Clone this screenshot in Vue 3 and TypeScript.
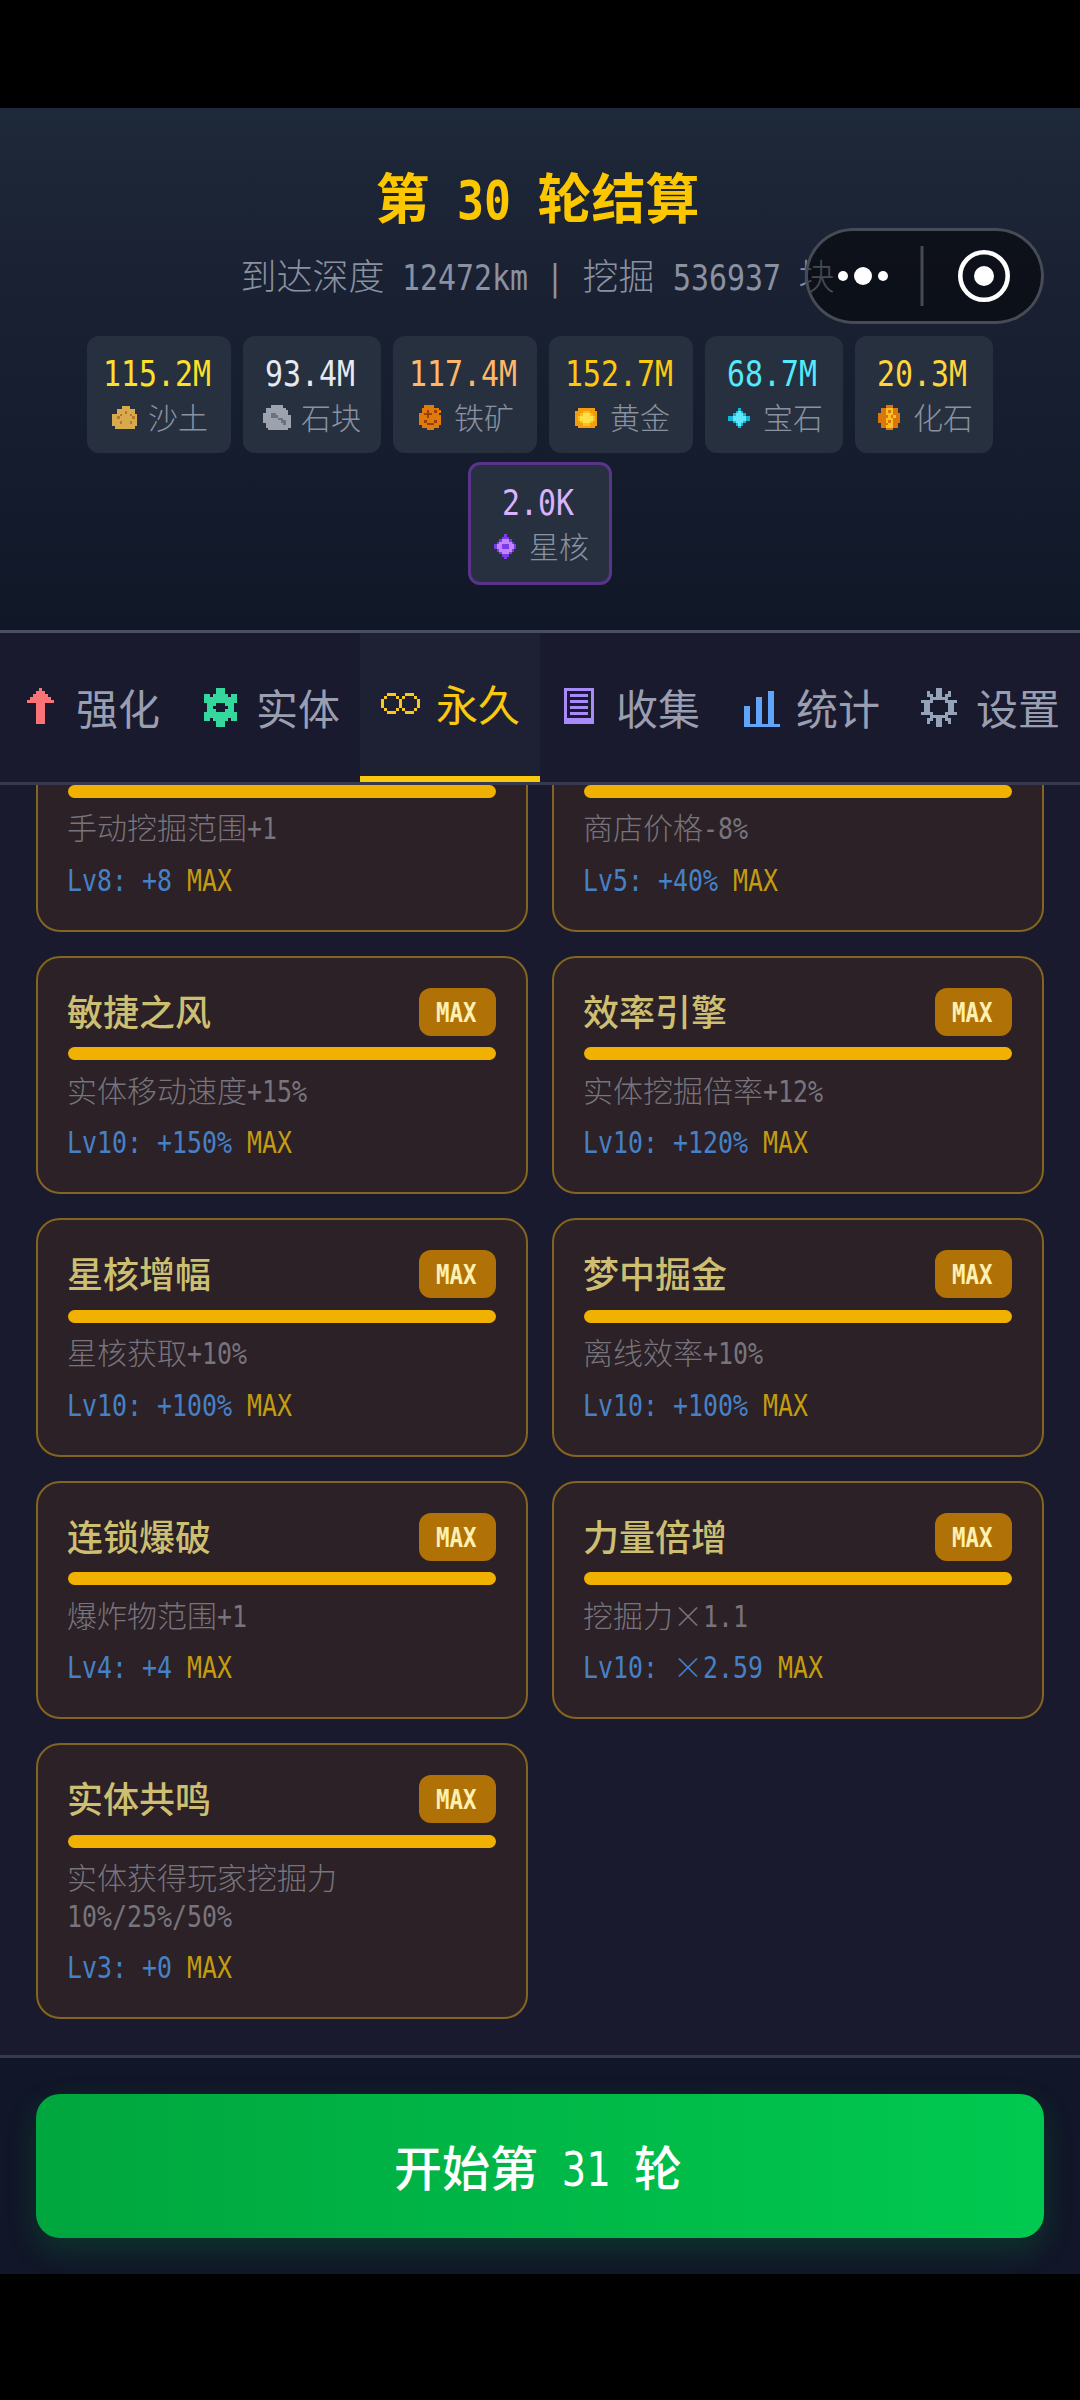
<script setup lang="ts">
import { h } from 'vue'

interface PixelIcon {
  map: string[]
  colors: Record<string, string>
  at?: [number, number]
}

interface Resource {
  value: string
  label: string
  color: string
  icon: string
  rare?: boolean
}

interface Upgrade {
  name?: string
  desc: string
  level: string
  bonus: string
}

/* Latin runs take half an em per character, ideographs and × a full em */
const Mono = (props: { t: string }) =>
  (props.t.match(/×| +|[\x21-\x7e]+|[^\x20-\x7e×]+/g) ?? []).map((run) => {
    if (run === '×') return h('span', { class: 'mono-wide' }, run)
    if (run[0] === ' ') return h('span', { class: 'mono-space' }, run)
    return /^[\x21-\x7e]/.test(run)
      ? h('span', { class: 'mono-half', style: { width: `${run.length / 2}em` } }, run)
      : run
  })
Mono.props = ['t']

/* Tab icons sit on a fixed 14×14 board, chip icons are as large as their map */
const Pixels = (props: { name: string; cell: number; board?: number }) => {
  const icon = icons[props.name]
  const [ox, oy] = icon.at ?? [0, 0]
  const rects = icon.map.flatMap((row, y) =>
    [...row].flatMap((c, x) =>
      c === '.' ? [] : [h('rect', { x: x + ox, y: y + oy, width: 1.02, height: 1.02, fill: icon.colors[c] })],
    ),
  )
  const w = props.board ?? icon.map[0].length
  const hgt = props.board ?? icon.map.length
  return h(
    'svg',
    { width: w * props.cell, height: hgt * props.cell, viewBox: `0 0 ${w} ${hgt}`, 'shape-rendering': 'crispEdges' },
    rects,
  )
}
Pixels.props = ['name', 'cell', 'board']

const icons: Record<string, PixelIcon> = {
  up: {
    at: [2, 0],
    colors: { a: '#fb7376' },
    map: ['....a....', '...aaa...', '..aaaaa..', '.aaaaaaa.', 'aaaaaaaaa', '...aaa...', '...aaa...', '...aaa...', '...aaa...', '...aaa...', '...aaa...', '...aaa...'],
  },
  entity: {
    at: [1, 0],
    colors: { a: '#34d89d' },
    map: ['....aaa....', '....aaa....', 'aa.aaaaa.aa', 'aaaaaaaaaaa', 'aaaaaaaaaaa', '.aaa...aaa.', '.aa.....aa.', '.aaa...aaa.', 'aaaaaaaaaaa', 'aaaaaaaaaaa', 'aa.aaaaa.aa', '....aaa....', '....aaa....'],
  },
  infinity: {
    at: [0, 3],
    colors: { a: '#fac81e' },
    map: ['..aaa...aaa..', '.a...a.a...a.', 'a.....a.....a', 'a.....a.....a', 'a.....a.....a', '.a...a.a...a.', '..aaa...aaa..'],
  },
  book: {
    at: [1, 0],
    colors: { a: '#a78bfa' },
    map: ['aaaaaaaaaa', 'a........a', 'a.aaaaaa.a', 'a........a', 'a.aaaaaa.a', 'a........a', 'a.aaaaaa.a', 'a........a', 'a.aaaaaa.a', 'a........a', 'aaaaaaaaaa', 'aaaaaaaaaa'],
  },
  chart: {
    at: [1, 1],
    colors: { a: '#60a5fa' },
    map: ['........aa..', '........aa..', '....aa..aa..', '....aa..aa..', '....aa..aa..', 'aa..aa..aa..', 'aa..aa..aa..', 'aa..aa..aa..', 'aa..aa..aa..', 'aa..aa..aa..', 'aa..aa..aa..', 'aaaaaaaaaaaa'],
  },
  gear: {
    colors: { a: '#94a3b8' },
    map: ['.....aa.....', '..a..aa..a..', '..aa.aa.aa..', '...aaaaaa...', 'aaaa....aaaa', '.aa......aa.', '.aa......aa.', '.aa......aa.', 'aaaa....aaaa', '...aaaaaa...', '..aa.aa.aa..', '..a..aa..a..', '.....aa.....'],
  },
  sand: {
    colors: { a: '#d9a94e', b: '#b07a2c' },
    map: ['....aaa...', '..aaaaaaa.', '..aaabaaa.', 'aaabaaabaa', 'aabaaaaaba', 'aaaaaaaaaa', 'aaabaaabaa', 'aaaaaaaaaa', '.aaaaaaaa.'],
  },
  stone: {
    colors: { a: '#9ca3af', b: '#6b7280' },
    map: ['...aaaaa...', '.aaaaaaaa..', '.aaaaaaaaa.', 'aaabbaaaaa.', 'aaabbbaaaaa', 'aaaaaabbaaa', 'aaaaaaabbaa', '.aaaaaaabaa', '.aaaaaaaaaa', '..aaaaaaaa.'],
  },
  iron: {
    colors: { a: '#e07b0b', b: '#9a3f08' },
    map: ['..aaaa...', '.aaaaaaa.', '.aabaabaa', 'aabbbaaa.', 'aaabaaaaa', 'aaaaaaaaa', 'aabaaabaa', 'aaabbbaaa', '.aaaaaaa.', '...aaa...'],
  },
  gold: {
    colors: { a: '#f39c0c', b: '#fbbf24', c: '#fde047' },
    map: ['.aaaaaaa.', 'aaabbbaaa', 'aabcccbaa', 'abcccccba', 'abcccccba', 'aabcccbaa', 'aaabbbaaa', '.aaaaaaa.'],
  },
  gem: {
    colors: { a: '#12b5d6', b: '#5ee6fb' },
    map: ['....a....', '...aba...', '..abbba..', 'aabbbbbaa', 'aabbbbbaa', '..abbba..', '...aba...', '....a....'],
  },
  fossil: {
    colors: { a: '#d9770a', b: '#fbbf24' },
    map: ['...aaa...', '.aabbbaa.', '.aababaa.', 'aaabbbaaa', 'aaaababaa', 'aaabbbaaa', 'aaababaaa', '.aaabbaa.', '.aabbbaa.', '...aaa...'],
  },
  core: {
    colors: { a: '#7c3aed', b: '#c084fc' },
    map: ['....a....', '...aaa...', '..abbba..', '.abbbbba.', 'abbaaabba', 'abbaaabba', '.abbbbba.', '..abbba..', '...aaa...', '....a....'],
  },
}

const resources: Resource[] = [
  { value: '115.2M', label: '沙土', color: '#fce029', icon: 'sand' },
  { value: '93.4M', label: '石块', color: '#e5eaf2', icon: 'stone' },
  { value: '117.4M', label: '铁矿', color: '#ffb86a', icon: 'iron' },
  { value: '152.7M', label: '黄金', color: '#fcc810', icon: 'gold' },
  { value: '68.7M', label: '宝石', color: '#53eafd', icon: 'gem' },
  { value: '20.3M', label: '化石', color: '#ffd53a', icon: 'fossil' },
  { value: '2.0K', label: '星核', color: '#dab2ff', icon: 'core', rare: true },
]

const tabs = [
  { label: '强化', icon: 'up' },
  { label: '实体', icon: 'entity' },
  { label: '永久', icon: 'infinity', active: true },
  { label: '收集', icon: 'book' },
  { label: '统计', icon: 'chart' },
  { label: '设置', icon: 'gear' },
]

/* The first row is scrolled up under the tabs, so its heads carry no text */
const upgrades: Upgrade[] = [
  { desc: '手动挖掘范围+1', level: 'Lv8:', bonus: '+8' },
  { desc: '商店价格-8%', level: 'Lv5:', bonus: '+40%' },
  { name: '敏捷之风', desc: '实体移动速度+15%', level: 'Lv10:', bonus: '+150%' },
  { name: '效率引擎', desc: '实体挖掘倍率+12%', level: 'Lv10:', bonus: '+120%' },
  { name: '星核增幅', desc: '星核获取+10%', level: 'Lv10:', bonus: '+100%' },
  { name: '梦中掘金', desc: '离线效率+10%', level: 'Lv10:', bonus: '+100%' },
  { name: '连锁爆破', desc: '爆炸物范围+1', level: 'Lv4:', bonus: '+4' },
  { name: '力量倍增', desc: '挖掘力×1.1', level: 'Lv10:', bonus: '×2.59' },
  { name: '实体共鸣', desc: '实体获得玩家挖掘力 10%/25%/50%', level: 'Lv3:', bonus: '+0' },
]
</script>

<template>
  <div class="screen">
    <header class="summary">
      <h1><Mono t="第 30 轮结算" /></h1>
      <p class="sub"><Mono t="到达深度 12472km | 挖掘 536937 块" /></p>
      <div class="chips">
        <div v-for="r in resources" :key="r.label" class="chip" :class="{ rare: r.rare }">
          <div class="chip-value" :style="{ color: r.color }"><Mono :t="r.value" /></div>
          <div class="chip-label"><i class="chip-icon"><Pixels :name="r.icon" :cell="2.5" /></i>{{ r.label }}</div>
        </div>
      </div>
      <div class="capsule">
        <svg width="239" height="96" viewBox="0 0 239 96">
          <g fill="#fff">
            <circle cx="38" cy="48" r="5" />
            <circle cx="58" cy="48" r="9" />
            <circle cx="78" cy="48" r="5" />
            <circle cx="179" cy="48" r="10" />
          </g>
          <rect x="115.5" y="18" width="3" height="60" fill="#464a53" />
          <circle cx="179" cy="48" r="23.7" fill="none" stroke="#fff" stroke-width="4.6" />
        </svg>
      </div>
    </header>

    <nav class="tabs">
      <div v-for="t in tabs" :key="t.label" class="tab" :class="{ active: t.active }">
        <i class="tab-icon"><Pixels :name="t.icon" :cell="3" :board="14" /></i>
        <span class="tab-text">{{ t.label }}</span>
      </div>
    </nav>

    <main class="list">
      <div class="grid">
        <section v-for="(u, i) in upgrades" :key="i" class="card">
          <div class="card-head">
            <template v-if="u.name">
              <h2>{{ u.name }}</h2>
              <span class="badge"><Mono t="MAX" /></span>
            </template>
          </div>
          <div class="bar"></div>
          <p class="desc"><Mono :t="u.desc" /></p>
          <p class="level"><Mono :t="`${u.level} ${u.bonus}`" /><span class="max"><Mono t=" MAX" /></span></p>
        </section>
      </div>
    </main>

    <footer class="foot">
      <button type="button"><Mono t="开始第 31 轮" /></button>
    </footer>
  </div>
</template>

<style>
body {
  background: #000;
}
.mono-half {
  display: inline-block;
  white-space: nowrap;
  text-align: left;
  transform: scaleX(0.83);
  transform-origin: 0 50%;
}
.mono-space {
  letter-spacing: -0.102em;
}
.mono-wide {
  display: inline-block;
  width: 1em;
  font-family: 'Noto Sans CJK SC', sans-serif;
  font-weight: 300;
  line-height: 1;
  text-align: center;
}
</style>

<style scoped>
.screen {
  box-sizing: border-box;
  width: 1080px;
  height: 2400px;
  padding: 108px 0 126px;
  background: #000;
  display: flex;
  flex-direction: column;
  overflow: hidden;
  font-family: 'DejaVu Sans Mono', 'Noto Sans CJK SC', monospace;
}
h1, h2, p {
  margin: 0;
  font-weight: 400;
}
.summary {
  position: relative;
  box-sizing: border-box;
  flex: none;
  height: 525px;
  padding-top: 62px;
  border-bottom: 3px solid #4a4e60;
  background: linear-gradient(180deg, #1e2939, #1a2133 32%, #101828);
  text-align: center;
}
h1 {
  margin-left: -5px;
  font-size: 54px;
  line-height: 62px;
  font-weight: 700;
  color: #fdc700;
}
.sub {
  margin: 23px 0 0 -5px;
  font-size: 36px;
  line-height: 45px;
  font-weight: 300;
  color: #8a92a1;
}
.chips {
  margin-top: 36px;
  padding: 0 60px;
  display: flex;
  flex-wrap: wrap;
  justify-content: center;
  gap: 9px 12px;
}
.chip {
  padding: 12px 18px;
  border-radius: 12px;
  background: #27303f;
}
.chip.rare {
  border: 3px solid #59348a;
}
.chip-value {
  margin: 0 2px 0 -2px;
  padding-top: 3px;
  font-size: 36px;
  line-height: 45px;
}
.chip-label {
  display: flex;
  align-items: center;
  justify-content: center;
  gap: 6px;
  margin: 0 2px 0 -2px;
  font-size: 30px;
  line-height: 45px;
  font-weight: 300;
  color: #8a92a1;
}
.chip-icon {
  width: 36px;
  height: 45px;
  padding-bottom: 2px;
  box-sizing: border-box;
  display: flex;
  align-items: center;
  justify-content: center;
}
.capsule {
  position: absolute;
  top: 120px;
  right: 36px;
  width: 239px;
  height: 96px;
  box-sizing: border-box;
  border-radius: 48px;
  background: rgba(0, 0, 0, 0.5);
  box-shadow: inset 0 0 0 3px #474b56;
}
.capsule svg {
  display: block;
}
.tabs {
  flex: none;
  display: flex;
  height: 149px;
  background: #1a1a2e;
  border-bottom: 3px solid #363a4e;
}
.tab {
  box-sizing: border-box;
  width: 180px;
  padding: 3px 0 0 21px;
  display: flex;
  align-items: center;
  gap: 13px;
  font-size: 42px;
  line-height: 48px;
  color: #999fb0;
}
.tab.active {
  padding-top: 0;
  border-bottom: 6px solid #fac80f;
  background: #1d2133;
  color: #fac80f;
}
.tab-icon {
  flex: none;
  width: 42px;
  height: 42px;
}
.tab-icon svg {
  display: block;
}
.tab-text {
  padding-top: 4px;
}
.list {
  flex: 1;
  min-height: 0;
  padding: 0 36px 36px;
  background: #1a1a2e;
  overflow: hidden;
  display: flex;
  flex-direction: column;
  justify-content: flex-end;
}
.grid {
  display: grid;
  grid-template-columns: 492px 492px;
  gap: 24px;
  align-items: start;
}
.card {
  box-sizing: border-box;
  padding: 30px;
  border: 2px solid #84651f;
  border-radius: 24px;
  background: #2c2126;
}
.card-head {
  display: flex;
  align-items: center;
  justify-content: space-between;
  height: 48px;
}
h2 {
  margin-left: -1px;
  padding-top: 4px;
  font-size: 36px;
  line-height: 44px;
  font-weight: 500;
  color: #cdbf72;
}
.badge {
  padding: 0 20px 0 16.5px;
  height: 48px;
  border-radius: 12px;
  background: #b07207;
  color: #fdf0b0;
  font-size: 27px;
  font-weight: 700;
  line-height: 49px;
}
.bar {
  margin-top: 11.5px;
  height: 13px;
  border-radius: 7px;
  background: #f0b100;
}
.desc {
  margin: 12.5px 0 0 -1px;
  font-size: 30px;
  line-height: 37.5px;
  font-weight: 300;
  color: #77747d;
}
.level {
  margin: 12px 0 0 -1px;
  height: 40px;
  font-size: 30px;
  line-height: 41px;
  color: #4681c8;
}
.max {
  color: #c39c10;
}
.foot {
  flex: none;
  box-sizing: border-box;
  height: 219px;
  padding: 36px;
  border-top: 3px solid #363a4e;
  background: #111628;
  overflow: hidden;
}
button {
  display: block;
  width: 100%;
  height: 144px;
  padding: 0 4px 2px 0;
  border: 0;
  border-radius: 24px;
  background: linear-gradient(90deg, #00a63e, #00c950);
  box-shadow: 0 12px 30px rgba(0, 166, 62, 0.22);
  color: #fff;
  font: inherit;
  font-size: 48px;
  font-weight: 500;
}
</style>
